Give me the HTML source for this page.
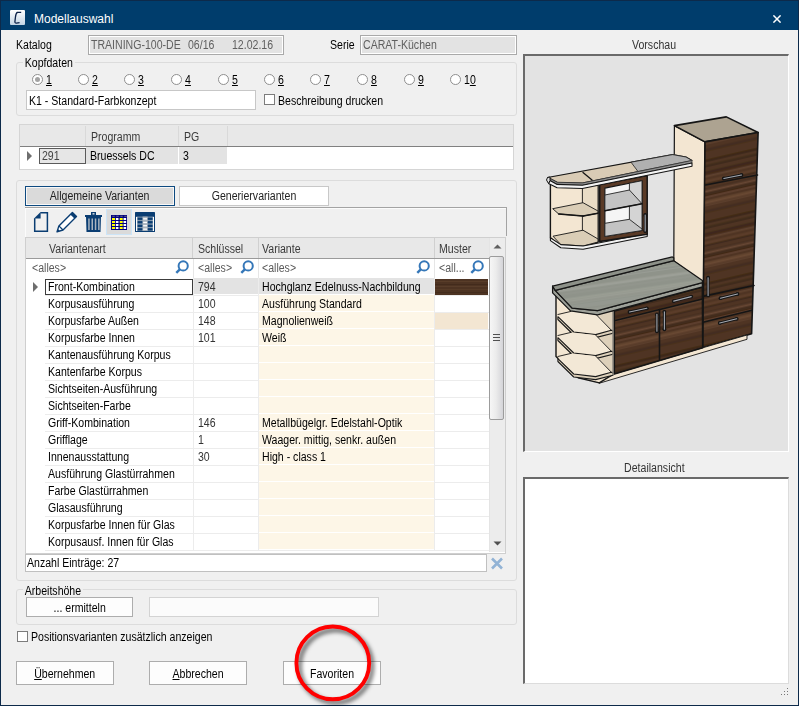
<!DOCTYPE html><html><head><meta charset="utf-8"><style>
*{margin:0;padding:0;box-sizing:border-box}
html,body{width:799px;height:706px;overflow:hidden;background:#f0f0f0}
body{position:relative;font-family:"Liberation Sans",sans-serif;font-size:12px;color:#000}
.a{position:absolute;white-space:nowrap}
.t{position:absolute;white-space:nowrap;line-height:14px;transform-origin:0 0;transform:scaleX(.88)}
.c{position:absolute;white-space:nowrap;line-height:14px;text-align:center}
.c span{display:inline-block;transform:scaleX(.88)}
.grp{position:absolute;border:1px solid #dcdcdc;border-radius:3px}
.lbl{position:absolute;background:#f0f0f0;padding:0 2px;line-height:14px;transform-origin:0 0;transform:scaleX(.88)}
.radio{position:absolute;width:12px;height:12px;border:1px solid #333;border-radius:50%;background:#fff}
.chk{position:absolute;width:11px;height:11px;border:1px solid #333;background:#fff}
.btn{position:absolute;border:1px solid #adadad;background:#fdfdfd;text-align:center;line-height:21px}
</style></head><body>
<div class="a" style="left:0px;top:0px;width:799px;height:30px;background:#003d6c"></div>
<div class="a" style="left:0px;top:0px;width:799px;height:1px;background:#0d2a4a"></div>
<div class="a" style="left:0px;top:0px;width:1px;height:706px;background:#0d2a4a"></div>
<div class="a" style="left:798px;top:0px;width:1px;height:706px;background:#0d2a4a"></div>
<div class="a" style="left:0px;top:705px;width:799px;height:1px;background:#0d2a4a"></div>
<div class="a" style="left:10px;top:10px;width:15px;height:15px;background:linear-gradient(#ffffff,#c2d4e4);border-radius:1px"></div>
<svg class="a" style="left:10px;top:10px" width="15" height="15" viewBox="0 0 15 15"><path d="M11.2 2.4 L7.3 2.4 Q5.8 3.4 5.4 7.5 L4.9 11.8 Q5 13.3 6.4 13.1 L9.6 12.7" fill="none" stroke="#0b2148" stroke-width="1.3"/></svg>
<div class="t" style="left:34px;top:12px;color:#fff;transform:none">Modellauswahl</div>
<svg class="a" style="left:773px;top:15px" width="8" height="8" viewBox="0 0 8 8"><path d="M0.4 0.4 L7.6 7.6 M7.6 0.4 L0.4 7.6" stroke="#fff" stroke-width="1.5"/></svg>
<div class="t" style="left:16px;top:38px;">Katalog</div>
<div class="a" style="left:88px;top:35px;width:196px;height:20px;border:1px solid #a9a9a9;background:#e3e3e3;box-shadow:inset 1px 1px 0 #fff,inset -1px -1px 0 #fff"></div>
<div class="t" style="left:91px;top:38px;color:#5f5f5f">TRAINING-100-DE</div>
<div class="t" style="left:188px;top:38px;color:#5f5f5f">06/16</div>
<div class="t" style="left:232px;top:38px;color:#5f5f5f">12.02.16</div>
<div class="t" style="left:330px;top:38px;">Serie</div>
<div class="a" style="left:360px;top:35px;width:157px;height:20px;border:1px solid #a9a9a9;background:#e3e3e3;box-shadow:inset 1px 1px 0 #fff,inset -1px -1px 0 #fff"></div>
<div class="t" style="left:363px;top:38px;color:#5f5f5f">CARAT-Küchen</div>
<div class="grp" style="left:16px;top:62px;width:501px;height:54px"></div>
<div class="lbl" style="left:23px;top:56px">Kopfdaten</div>
<div class="a" style="left:32px;top:74px;width:11px;height:11px;border:1px solid #8f8f8f;border-radius:50%;background:#fff"></div>
<div class="a" style="left:35px;top:77px;width:5px;height:5px;border-radius:50%;background:#a3a3a3"></div>
<div class="t" style="left:46px;top:73px;"><u>1</u></div>
<div class="a" style="left:78px;top:74px;width:11px;height:11px;border:1px solid #8f8f8f;border-radius:50%;background:#fff"></div>
<div class="t" style="left:92px;top:73px;"><u>2</u></div>
<div class="a" style="left:124px;top:74px;width:11px;height:11px;border:1px solid #8f8f8f;border-radius:50%;background:#fff"></div>
<div class="t" style="left:138px;top:73px;"><u>3</u></div>
<div class="a" style="left:171px;top:74px;width:11px;height:11px;border:1px solid #8f8f8f;border-radius:50%;background:#fff"></div>
<div class="t" style="left:185px;top:73px;"><u>4</u></div>
<div class="a" style="left:218px;top:74px;width:11px;height:11px;border:1px solid #8f8f8f;border-radius:50%;background:#fff"></div>
<div class="t" style="left:232px;top:73px;"><u>5</u></div>
<div class="a" style="left:264px;top:74px;width:11px;height:11px;border:1px solid #8f8f8f;border-radius:50%;background:#fff"></div>
<div class="t" style="left:278px;top:73px;"><u>6</u></div>
<div class="a" style="left:310px;top:74px;width:11px;height:11px;border:1px solid #8f8f8f;border-radius:50%;background:#fff"></div>
<div class="t" style="left:324px;top:73px;"><u>7</u></div>
<div class="a" style="left:357px;top:74px;width:11px;height:11px;border:1px solid #8f8f8f;border-radius:50%;background:#fff"></div>
<div class="t" style="left:371px;top:73px;"><u>8</u></div>
<div class="a" style="left:404px;top:74px;width:11px;height:11px;border:1px solid #8f8f8f;border-radius:50%;background:#fff"></div>
<div class="t" style="left:418px;top:73px;"><u>9</u></div>
<div class="a" style="left:450px;top:74px;width:11px;height:11px;border:1px solid #8f8f8f;border-radius:50%;background:#fff"></div>
<div class="t" style="left:464px;top:73px;">1<u>0</u></div>
<div class="a" style="left:26px;top:90px;width:230px;height:20px;border:1px solid #c7c7c7;background:#fff"></div>
<div class="t" style="left:29px;top:94px;">K1 - Standard-Farbkonzept</div>
<div class="a" style="left:264px;top:94px;width:11px;height:11px;border:1px solid #7c7c7c;background:#fff"></div>
<div class="t" style="left:278px;top:94px;">Beschreibung drucken</div>
<div class="a" style="left:19px;top:124px;width:495px;height:46px;border:1px solid #d5d5d5;background:#fff"></div>
<div class="a" style="left:20px;top:125px;width:493px;height:22px;background:#e8e8e8;border-bottom:1px solid #808080"></div>
<div class="a" style="left:85px;top:126px;width:1px;height:20px;background:#d9d9d9"></div>
<div class="a" style="left:178px;top:126px;width:1px;height:20px;background:#d9d9d9"></div>
<div class="a" style="left:227px;top:126px;width:1px;height:20px;background:#d9d9d9"></div>
<div class="t" style="left:91px;top:130px;color:#3a3a3a">Programm</div>
<div class="t" style="left:184px;top:130px;color:#3a3a3a">PG</div>
<svg class="a" style="left:27px;top:151px" width="6" height="10"><path d="M0 0 L5 5 L0 10Z" fill="#6e6e6e"/></svg>
<div class="a" style="left:39px;top:148px;width:47px;height:16px;border:1px solid #5a5a5a;background:#e6e6e6"></div>
<div class="t" style="left:42px;top:149px;color:#444">291</div>
<div class="a" style="left:86px;top:147px;width:92px;height:17px;background:#e3e3e3"></div>
<div class="a" style="left:179px;top:147px;width:48px;height:17px;background:#e3e3e3"></div>
<div class="t" style="left:90px;top:149px;">Bruessels DC</div>
<div class="t" style="left:183px;top:149px;">3</div>
<div class="grp" style="left:16px;top:180px;width:501px;height:401px"></div>
<div class="a" style="left:25px;top:186px;width:150px;height:20px;border:1px solid #0e4a80;background:#dadada;box-shadow:inset 1px 1px 0 #f8f8f8,inset -1px -1px 0 #f8f8f8"></div>
<div class="c" style="left:25px;top:189px;width:150px;color:#222"><span>Allgemeine Varianten</span></div>
<div class="a" style="left:179px;top:186px;width:150px;height:20px;border:1px solid #c8c8c8;background:#fff"></div>
<div class="c" style="left:179px;top:189px;width:150px;color:#222"><span>Generiervarianten</span></div>
<div class="a" style="left:25px;top:207px;width:482px;height:1px;background:#a3a3a3"></div>
<div class="a" style="left:506px;top:208px;width:1px;height:28px;background:#a3a3a3"></div>
<div class="a" style="left:25px;top:208px;width:481px;height:1px;background:#fbfbfb"></div>
<div class="a" style="left:25px;top:208px;width:1px;height:29px;background:#fbfbfb"></div>
<svg class="a" style="left:25px;top:207px" width="140" height="30" viewBox="25 207 140 30"><path d="M40.4 212.7 H47.4 V231.2 H34.7 V218.2" fill="none" stroke="#0a3d72" stroke-width="1.5"/><path d="M34 218.6 L40.6 212 L40.6 218.6 Z" fill="#0a3d72"/><path d="M57 231.9 L58.9 225.9 L72.4 212.4 L76.5 216.5 L63 230 Z" fill="#fff" stroke="#0a3d72" stroke-width="1.4" stroke-linejoin="round"/><path d="M58.9 225.9 L63 230" stroke="#0a3d72" stroke-width="1.3"/><path d="M57 231.9 L57.9 228.9 L60 231 Z" fill="#0a3d72"/><path d="M70.3 214.5 L72.4 212.4 L76.5 216.5 L74.4 218.6 Z" fill="#0a3d72"/><rect x="91" y="212" width="5" height="3.4" fill="#0a3d72"/><rect x="92.5" y="213.2" width="2" height="1.3" fill="#f0f0f0"/><rect x="85" y="215" width="17" height="2" fill="#0a3d72"/><path d="M86 217 H101 L100.5 232 H86.5 Z" fill="#0a3d72"/><rect x="88.2" y="218.5" width="1.5" height="11.5" fill="#a9b4c0"/><rect x="91.5" y="218.5" width="1.5" height="11.5" fill="#a9b4c0"/><rect x="94.8" y="218.5" width="1.5" height="11.5" fill="#a9b4c0"/><rect x="98.1" y="218.5" width="1.5" height="11.5" fill="#a9b4c0"/><rect x="106.5" y="209.5" width="25" height="25" fill="#dadada" stroke="#cce4f7" stroke-width="1"/><rect x="111" y="215" width="16" height="15" fill="#000080"/><rect x="112.3" y="215.8" width="2.4" height="0.8" fill="#888"/><rect x="116.3" y="215.8" width="2.4" height="0.8" fill="#888"/><rect x="120.3" y="215.8" width="2.4" height="0.8" fill="#888"/><rect x="124.3" y="215.8" width="2.4" height="0.8" fill="#888"/><rect x="112.00" y="218" width="3" height="2" fill="#ffff00"/><rect x="115.85" y="218" width="2.6" height="2" fill="#ffffff"/><rect x="119.70" y="218" width="3" height="2" fill="#ffff00"/><rect x="123.55" y="218" width="2.6" height="2" fill="#ffffff"/><rect x="112.00" y="221" width="3" height="2" fill="#ffff00"/><rect x="115.85" y="221" width="2.6" height="2" fill="#ffffff"/><rect x="119.70" y="221" width="3" height="2" fill="#ffff00"/><rect x="123.55" y="221" width="2.6" height="2" fill="#ffffff"/><rect x="112.00" y="224" width="3" height="2" fill="#ffff00"/><rect x="115.85" y="224" width="2.6" height="2" fill="#ffffff"/><rect x="119.70" y="224" width="3" height="2" fill="#ffff00"/><rect x="123.55" y="224" width="2.6" height="2" fill="#ffffff"/><rect x="112.00" y="227" width="3" height="2" fill="#ffff00"/><rect x="115.85" y="227" width="2.6" height="2" fill="#ffffff"/><rect x="119.70" y="227" width="3" height="2" fill="#ffff00"/><rect x="123.55" y="227" width="2.6" height="2" fill="#ffffff"/><rect x="135" y="212" width="20" height="20" rx="0.6" fill="#0a3d72"/><rect x="136" y="216.6" width="18" height="14.4" fill="#8196ac"/><rect x="136" y="217" width="1.2" height="14" fill="#ffffff"/><rect x="152.8" y="217" width="1.2" height="14" fill="#ffffff"/><rect x="137.6" y="217.6" width="5" height="2.3" fill="#0a3d72"/><rect x="147.6" y="217.6" width="5" height="2.3" fill="#0a3d72"/><rect x="137.6" y="221.1" width="5" height="2.3" fill="#0a3d72"/><rect x="147.6" y="221.1" width="5" height="2.3" fill="#0a3d72"/><rect x="137.6" y="224.7" width="5" height="2.3" fill="#0a3d72"/><rect x="147.6" y="224.7" width="5" height="2.3" fill="#0a3d72"/><rect x="137.6" y="228.2" width="5" height="2.3" fill="#0a3d72"/><rect x="147.6" y="228.2" width="5" height="2.3" fill="#0a3d72"/><rect x="142.6" y="216.6" width="5" height="14.4" fill="#aab4be"/><rect x="143.2" y="218.2" width="3.8" height="1.3" fill="#ffffff"/><rect x="143.2" y="221.8" width="3.8" height="1.3" fill="#ffffff"/><rect x="143.2" y="225.1" width="3.8" height="1.3" fill="#ffffff"/><rect x="143.2" y="228.5" width="3.8" height="1.3" fill="#ffffff"/></svg>
<div class="a" style="left:25px;top:237px;width:481px;height:317px;border:1px solid #cfcfcf;background:#fff"></div>
<div class="a" style="left:26px;top:238px;width:463px;height:21px;background:#e8e8e8;border-bottom:1px solid #9a9a9a"></div>
<div class="a" style="left:192px;top:238px;width:1px;height:20px;background:#d0d0d0"></div>
<div class="a" style="left:258px;top:238px;width:1px;height:20px;background:#d0d0d0"></div>
<div class="a" style="left:434px;top:238px;width:1px;height:20px;background:#d0d0d0"></div>
<div class="t" style="left:49px;top:242px;color:#3a3a3a">Variantenart</div>
<div class="t" style="left:198px;top:242px;color:#3a3a3a">Schlüssel</div>
<div class="t" style="left:262px;top:242px;color:#3a3a3a">Variante</div>
<div class="t" style="left:439px;top:242px;color:#3a3a3a">Muster</div>
<div class="a" style="left:193px;top:259px;width:1px;height:19px;background:#e6e6e6"></div>
<div class="a" style="left:258px;top:259px;width:1px;height:19px;background:#e6e6e6"></div>
<div class="a" style="left:434px;top:259px;width:1px;height:19px;background:#e6e6e6"></div>
<div class="t" style="left:32px;top:261px;color:#5a5a5a">&lt;alles&gt;</div>
<div class="t" style="left:198px;top:261px;color:#5a5a5a">&lt;alles&gt;</div>
<div class="t" style="left:262px;top:261px;color:#5a5a5a">&lt;alles&gt;</div>
<div class="t" style="left:439px;top:261px;color:#5a5a5a">&lt;all...</div>
<svg class="a" style="left:175px;top:260px" width="14" height="14" viewBox="0 0 14 14"><circle cx="8.2" cy="5.9" r="4.6" fill="none" stroke="#3577b8" stroke-width="2"/><path d="M5 9.1 L1.3 12.8" stroke="#3577b8" stroke-width="2.4" stroke-linecap="butt"/></svg>
<svg class="a" style="left:240px;top:260px" width="14" height="14" viewBox="0 0 14 14"><circle cx="8.2" cy="5.9" r="4.6" fill="none" stroke="#3577b8" stroke-width="2"/><path d="M5 9.1 L1.3 12.8" stroke="#3577b8" stroke-width="2.4" stroke-linecap="butt"/></svg>
<svg class="a" style="left:416px;top:260px" width="14" height="14" viewBox="0 0 14 14"><circle cx="8.2" cy="5.9" r="4.6" fill="none" stroke="#3577b8" stroke-width="2"/><path d="M5 9.1 L1.3 12.8" stroke="#3577b8" stroke-width="2.4" stroke-linecap="butt"/></svg>
<svg class="a" style="left:470px;top:260px" width="14" height="14" viewBox="0 0 14 14"><circle cx="8.2" cy="5.9" r="4.6" fill="none" stroke="#3577b8" stroke-width="2"/><path d="M5 9.1 L1.3 12.8" stroke="#3577b8" stroke-width="2.4" stroke-linecap="butt"/></svg>
<div class="a" style="left:194px;top:278px;width:240px;height:16px;background:#e3e3e3"></div>
<div class="a" style="left:45px;top:295px;width:444px;height:1px;background:#ececec"></div>
<div class="a" style="left:193px;top:278px;width:1px;height:17px;background:#ececec"></div>
<div class="a" style="left:258px;top:278px;width:1px;height:17px;background:#ececec"></div>
<div class="a" style="left:434px;top:278px;width:1px;height:17px;background:#ececec"></div>
<div class="t" style="left:48px;top:280px;">Front-Kombination</div>
<div class="t" style="left:198px;top:280px;color:#333">794</div>
<div class="t" style="left:262px;top:280px;">Hochglanz Edelnuss-Nachbildung</div>
<div class="a" style="left:259px;top:295px;width:175px;height:16px;background:#fdf6e7"></div>
<div class="a" style="left:45px;top:312px;width:444px;height:1px;background:#ececec"></div>
<div class="a" style="left:193px;top:295px;width:1px;height:17px;background:#ececec"></div>
<div class="a" style="left:258px;top:295px;width:1px;height:17px;background:#ececec"></div>
<div class="a" style="left:434px;top:295px;width:1px;height:17px;background:#ececec"></div>
<div class="t" style="left:48px;top:297px;">Korpusausführung</div>
<div class="t" style="left:198px;top:297px;color:#333">100</div>
<div class="t" style="left:262px;top:297px;">Ausführung Standard</div>
<div class="a" style="left:259px;top:312px;width:175px;height:16px;background:#fdf6e7"></div>
<div class="a" style="left:45px;top:329px;width:444px;height:1px;background:#ececec"></div>
<div class="a" style="left:193px;top:312px;width:1px;height:17px;background:#ececec"></div>
<div class="a" style="left:258px;top:312px;width:1px;height:17px;background:#ececec"></div>
<div class="a" style="left:434px;top:312px;width:1px;height:17px;background:#ececec"></div>
<div class="t" style="left:48px;top:314px;">Korpusfarbe Außen</div>
<div class="t" style="left:198px;top:314px;color:#333">148</div>
<div class="t" style="left:262px;top:314px;">Magnolienweiß</div>
<div class="a" style="left:259px;top:329px;width:175px;height:16px;background:#fdf6e7"></div>
<div class="a" style="left:45px;top:346px;width:444px;height:1px;background:#ececec"></div>
<div class="a" style="left:193px;top:329px;width:1px;height:17px;background:#ececec"></div>
<div class="a" style="left:258px;top:329px;width:1px;height:17px;background:#ececec"></div>
<div class="a" style="left:434px;top:329px;width:1px;height:17px;background:#ececec"></div>
<div class="t" style="left:48px;top:331px;">Korpusfarbe Innen</div>
<div class="t" style="left:198px;top:331px;color:#333">101</div>
<div class="t" style="left:262px;top:331px;">Weiß</div>
<div class="a" style="left:259px;top:346px;width:175px;height:16px;background:#fdf6e7"></div>
<div class="a" style="left:45px;top:363px;width:444px;height:1px;background:#ececec"></div>
<div class="a" style="left:193px;top:346px;width:1px;height:17px;background:#ececec"></div>
<div class="a" style="left:258px;top:346px;width:1px;height:17px;background:#ececec"></div>
<div class="a" style="left:434px;top:346px;width:1px;height:17px;background:#ececec"></div>
<div class="t" style="left:48px;top:348px;">Kantenausführung Korpus</div>
<div class="t" style="left:198px;top:348px;color:#333"></div>
<div class="t" style="left:262px;top:348px;"></div>
<div class="a" style="left:259px;top:363px;width:175px;height:16px;background:#fdf6e7"></div>
<div class="a" style="left:45px;top:380px;width:444px;height:1px;background:#ececec"></div>
<div class="a" style="left:193px;top:363px;width:1px;height:17px;background:#ececec"></div>
<div class="a" style="left:258px;top:363px;width:1px;height:17px;background:#ececec"></div>
<div class="a" style="left:434px;top:363px;width:1px;height:17px;background:#ececec"></div>
<div class="t" style="left:48px;top:365px;">Kantenfarbe Korpus</div>
<div class="t" style="left:198px;top:365px;color:#333"></div>
<div class="t" style="left:262px;top:365px;"></div>
<div class="a" style="left:259px;top:380px;width:175px;height:16px;background:#fdf6e7"></div>
<div class="a" style="left:45px;top:397px;width:444px;height:1px;background:#ececec"></div>
<div class="a" style="left:193px;top:380px;width:1px;height:17px;background:#ececec"></div>
<div class="a" style="left:258px;top:380px;width:1px;height:17px;background:#ececec"></div>
<div class="a" style="left:434px;top:380px;width:1px;height:17px;background:#ececec"></div>
<div class="t" style="left:48px;top:382px;">Sichtseiten-Ausführung</div>
<div class="t" style="left:198px;top:382px;color:#333"></div>
<div class="t" style="left:262px;top:382px;"></div>
<div class="a" style="left:259px;top:397px;width:175px;height:16px;background:#fdf6e7"></div>
<div class="a" style="left:45px;top:414px;width:444px;height:1px;background:#ececec"></div>
<div class="a" style="left:193px;top:397px;width:1px;height:17px;background:#ececec"></div>
<div class="a" style="left:258px;top:397px;width:1px;height:17px;background:#ececec"></div>
<div class="a" style="left:434px;top:397px;width:1px;height:17px;background:#ececec"></div>
<div class="t" style="left:48px;top:399px;">Sichtseiten-Farbe</div>
<div class="t" style="left:198px;top:399px;color:#333"></div>
<div class="t" style="left:262px;top:399px;"></div>
<div class="a" style="left:259px;top:414px;width:175px;height:16px;background:#fdf6e7"></div>
<div class="a" style="left:45px;top:431px;width:444px;height:1px;background:#ececec"></div>
<div class="a" style="left:193px;top:414px;width:1px;height:17px;background:#ececec"></div>
<div class="a" style="left:258px;top:414px;width:1px;height:17px;background:#ececec"></div>
<div class="a" style="left:434px;top:414px;width:1px;height:17px;background:#ececec"></div>
<div class="t" style="left:48px;top:416px;">Griff-Kombination</div>
<div class="t" style="left:198px;top:416px;color:#333">146</div>
<div class="t" style="left:262px;top:416px;">Metallbügelgr. Edelstahl-Optik</div>
<div class="a" style="left:259px;top:431px;width:175px;height:16px;background:#fdf6e7"></div>
<div class="a" style="left:45px;top:448px;width:444px;height:1px;background:#ececec"></div>
<div class="a" style="left:193px;top:431px;width:1px;height:17px;background:#ececec"></div>
<div class="a" style="left:258px;top:431px;width:1px;height:17px;background:#ececec"></div>
<div class="a" style="left:434px;top:431px;width:1px;height:17px;background:#ececec"></div>
<div class="t" style="left:48px;top:433px;">Grifflage</div>
<div class="t" style="left:198px;top:433px;color:#333">1</div>
<div class="t" style="left:262px;top:433px;">Waager. mittig, senkr. außen</div>
<div class="a" style="left:259px;top:448px;width:175px;height:16px;background:#fdf6e7"></div>
<div class="a" style="left:45px;top:465px;width:444px;height:1px;background:#ececec"></div>
<div class="a" style="left:193px;top:448px;width:1px;height:17px;background:#ececec"></div>
<div class="a" style="left:258px;top:448px;width:1px;height:17px;background:#ececec"></div>
<div class="a" style="left:434px;top:448px;width:1px;height:17px;background:#ececec"></div>
<div class="t" style="left:48px;top:450px;">Innenausstattung</div>
<div class="t" style="left:198px;top:450px;color:#333">30</div>
<div class="t" style="left:262px;top:450px;">High - class 1</div>
<div class="a" style="left:259px;top:465px;width:175px;height:16px;background:#fdf6e7"></div>
<div class="a" style="left:45px;top:482px;width:444px;height:1px;background:#ececec"></div>
<div class="a" style="left:193px;top:465px;width:1px;height:17px;background:#ececec"></div>
<div class="a" style="left:258px;top:465px;width:1px;height:17px;background:#ececec"></div>
<div class="a" style="left:434px;top:465px;width:1px;height:17px;background:#ececec"></div>
<div class="t" style="left:48px;top:467px;">Ausführung Glastürrahmen</div>
<div class="t" style="left:198px;top:467px;color:#333"></div>
<div class="t" style="left:262px;top:467px;"></div>
<div class="a" style="left:259px;top:482px;width:175px;height:16px;background:#fdf6e7"></div>
<div class="a" style="left:45px;top:499px;width:444px;height:1px;background:#ececec"></div>
<div class="a" style="left:193px;top:482px;width:1px;height:17px;background:#ececec"></div>
<div class="a" style="left:258px;top:482px;width:1px;height:17px;background:#ececec"></div>
<div class="a" style="left:434px;top:482px;width:1px;height:17px;background:#ececec"></div>
<div class="t" style="left:48px;top:484px;">Farbe Glastürrahmen</div>
<div class="t" style="left:198px;top:484px;color:#333"></div>
<div class="t" style="left:262px;top:484px;"></div>
<div class="a" style="left:259px;top:499px;width:175px;height:16px;background:#fdf6e7"></div>
<div class="a" style="left:45px;top:516px;width:444px;height:1px;background:#ececec"></div>
<div class="a" style="left:193px;top:499px;width:1px;height:17px;background:#ececec"></div>
<div class="a" style="left:258px;top:499px;width:1px;height:17px;background:#ececec"></div>
<div class="a" style="left:434px;top:499px;width:1px;height:17px;background:#ececec"></div>
<div class="t" style="left:48px;top:501px;">Glasausführung</div>
<div class="t" style="left:198px;top:501px;color:#333"></div>
<div class="t" style="left:262px;top:501px;"></div>
<div class="a" style="left:259px;top:516px;width:175px;height:16px;background:#fdf6e7"></div>
<div class="a" style="left:45px;top:533px;width:444px;height:1px;background:#ececec"></div>
<div class="a" style="left:193px;top:516px;width:1px;height:17px;background:#ececec"></div>
<div class="a" style="left:258px;top:516px;width:1px;height:17px;background:#ececec"></div>
<div class="a" style="left:434px;top:516px;width:1px;height:17px;background:#ececec"></div>
<div class="t" style="left:48px;top:518px;">Korpusfarbe Innen für Glas</div>
<div class="t" style="left:198px;top:518px;color:#333"></div>
<div class="t" style="left:262px;top:518px;"></div>
<div class="a" style="left:259px;top:533px;width:175px;height:16px;background:#fdf6e7"></div>
<div class="a" style="left:45px;top:550px;width:444px;height:1px;background:#ececec"></div>
<div class="a" style="left:193px;top:533px;width:1px;height:17px;background:#ececec"></div>
<div class="a" style="left:258px;top:533px;width:1px;height:17px;background:#ececec"></div>
<div class="a" style="left:434px;top:533px;width:1px;height:17px;background:#ececec"></div>
<div class="t" style="left:48px;top:535px;">Korpusausf. Innen für Glas</div>
<div class="t" style="left:198px;top:535px;color:#333"></div>
<div class="t" style="left:262px;top:535px;"></div>
<div class="a" style="left:45px;top:279px;width:148px;height:16px;border:1px solid #3c3c3c;background:transparent"></div>
<svg class="a" style="left:33px;top:282px" width="6" height="10"><path d="M0 0 L5 5 L0 10Z" fill="#6e6e6e"/></svg>
<svg class="a" style="left:435px;top:279px" width="53" height="16"><rect width="53" height="16" fill="#4d3322"/><rect y="2" width="53" height="1" fill="#5e412c" opacity=".7"/><rect y="5" width="53" height="1" fill="#3e281a" opacity=".7"/><rect y="7" width="53" height="1" fill="#604430" opacity=".6"/><rect y="10" width="53" height="1" fill="#5a3e2a" opacity=".7"/><rect y="13" width="53" height="1" fill="#3f2a1b" opacity=".7"/></svg>
<div class="a" style="left:435px;top:313px;width:53px;height:16px;background:#f3e6d2"></div>
<div class="a" style="left:489px;top:238px;width:16px;height:314px;background:#ececec;border-left:1px solid #e4e4e4"></div>
<svg class="a" style="left:493px;top:244px" width="9" height="5"><path d="M0.5 4.5 L4.5 0.5 L8.5 4.5Z" fill="#606060"/></svg>
<div class="a" style="left:489px;top:256px;width:15px;height:164px;border:1px solid #9c9c9c;background:linear-gradient(90deg,#f6f6f6,#ececec 45%,#d4d4d8);border-radius:2px"></div>
<div class="a" style="left:493px;top:334px;width:7px;height:1px;background:#505050"></div>
<div class="a" style="left:493px;top:337px;width:7px;height:1px;background:#505050"></div>
<div class="a" style="left:493px;top:340px;width:7px;height:1px;background:#505050"></div>
<svg class="a" style="left:493px;top:541px" width="9" height="5"><path d="M0.5 0.5 L4.5 4.5 L8.5 0.5Z" fill="#505050"/></svg>
<div class="a" style="left:25px;top:554px;width:462px;height:18px;border:1px solid #c0c0c0;background:#fff"></div>
<div class="t" style="left:27px;top:556px;">Anzahl Einträge: 27</div>
<svg class="a" style="left:490px;top:557px" width="14" height="13" viewBox="0 0 14 13"><path d="M2 1.5 L12 11.5 M12 1.5 L2 11.5" stroke="#92b3d5" stroke-width="2.6"/></svg>
<div class="grp" style="left:16px;top:589px;width:501px;height:36px"></div>
<div class="lbl" style="left:23px;top:584px">Arbeitshöhe</div>
<div class="a" style="left:26px;top:597px;width:107px;height:20px;border:1px solid #adadad;background:#fdfdfd"></div>
<div class="c" style="left:26px;top:601px;width:107px;"><span>... ermitteln</span></div>
<div class="a" style="left:149px;top:597px;width:230px;height:20px;border:1px solid #d3d3d3;background:#fbfbfb"></div>
<div class="a" style="left:17px;top:631px;width:11px;height:11px;border:1px solid #7c7c7c;background:#fff"></div>
<div class="t" style="left:31px;top:630px;">Positionsvarianten zusätzlich anzeigen</div>
<div class="a" style="left:16px;top:661px;width:98px;height:24px;border:1px solid #adadad;background:#fdfdfd"></div>
<div class="c" style="left:16px;top:667px;width:98px;"><span><u>Ü</u>bernehmen</span></div>
<div class="a" style="left:149px;top:661px;width:98px;height:24px;border:1px solid #adadad;background:#fdfdfd"></div>
<div class="c" style="left:149px;top:667px;width:98px;"><span><u>A</u>bbrechen</span></div>
<div class="a" style="left:283px;top:661px;width:98px;height:24px;border:1px solid #adadad;background:#fdfdfd"></div>
<div class="c" style="left:283px;top:667px;width:98px;"><span>Favoriten</span></div>
<div class="c" style="left:521px;top:38px;width:266px;color:#333"><span>Vorschau</span></div>
<div class="a" style="left:523px;top:54px;width:266px;height:398px;background:#e3e3e3;border-top:2px solid #6a6a6a;border-left:2px solid #6a6a6a;border-right:1px solid #fff;border-bottom:1px solid #fff"></div>
<div class="c" style="left:521px;top:461px;width:266px;color:#333"><span>Detailansicht</span></div>
<div class="a" style="left:523px;top:477px;width:266px;height:207px;background:#fff;border-top:2px solid #6a6a6a;border-left:2px solid #6a6a6a;border-right:1px solid #dcdcdc;border-bottom:1px solid #dcdcdc"></div>
<div class="a" style="left:787px;top:688px;width:1px;height:1px;background:#777"></div>
<div class="a" style="left:784px;top:691px;width:1px;height:1px;background:#777"></div>
<div class="a" style="left:787px;top:691px;width:1px;height:1px;background:#777"></div>
<div class="a" style="left:781px;top:694px;width:1px;height:1px;background:#777"></div>
<div class="a" style="left:784px;top:694px;width:1px;height:1px;background:#777"></div>
<div class="a" style="left:787px;top:694px;width:1px;height:1px;background:#777"></div>
<svg class="a" style="left:280px;top:612px" width="110" height="100" viewBox="0 0 110 100"><defs><filter id="sh" x="-30%" y="-30%" width="160%" height="160%"><feGaussianBlur stdDeviation="2.1"/></filter></defs><circle cx="55.8" cy="54.2" r="36.3" fill="none" stroke="#000" stroke-opacity="0.6" stroke-width="4" filter="url(#sh)"/><circle cx="52.8" cy="50.9" r="36.4" fill="none" stroke="#ff0000" stroke-width="3.9"/></svg>
<svg class="a" style="left:525px;top:56px" width="263" height="394" viewBox="525 56 263 394"><defs><filter id="wblur" x="-10%" y="-50%" width="120%" height="200%"><feGaussianBlur stdDeviation="0.6"/></filter><pattern id="wood" patternUnits="userSpaceOnUse" width="120" height="60" patternTransform="rotate(-13)"><rect width="120" height="60" fill="#4f3423"/><g filter="url(#wblur)"><rect x="-20" y="14.3" width="160" height="2.5" fill="#33200f" opacity="0.62"/><rect x="-20" y="28.4" width="160" height="2.5" fill="#2f1d12" opacity="0.30"/><rect x="-20" y="50.2" width="160" height="1.8" fill="#765340" opacity="0.37"/><rect x="-20" y="43.0" width="160" height="2.4" fill="#2f1d12" opacity="0.47"/><rect x="-20" y="38.3" width="160" height="1.5" fill="#7d5a43" opacity="0.35"/><rect x="-20" y="55.6" width="160" height="2.1" fill="#6e4c36" opacity="0.53"/><rect x="-20" y="3.8" width="160" height="2.9" fill="#2f1d12" opacity="0.31"/><rect x="-20" y="46.8" width="160" height="3.1" fill="#33200f" opacity="0.47"/><rect x="-20" y="43.1" width="160" height="3.2" fill="#7d5a43" opacity="0.58"/><rect x="-20" y="25.6" width="160" height="2.9" fill="#2f1d12" opacity="0.46"/><rect x="-20" y="56.1" width="160" height="3.2" fill="#6e4c36" opacity="0.31"/><rect x="-20" y="29.7" width="160" height="1.8" fill="#7d5a43" opacity="0.45"/><rect x="-20" y="37.6" width="160" height="1.9" fill="#2f1d12" opacity="0.59"/><rect x="-20" y="34.4" width="160" height="2.4" fill="#6a4733" opacity="0.50"/><rect x="-20" y="54.3" width="160" height="2.8" fill="#6e4c36" opacity="0.60"/><rect x="-20" y="59.5" width="160" height="2.7" fill="#765340" opacity="0.54"/><rect x="-20" y="19.6" width="160" height="2.4" fill="#2f1d12" opacity="0.50"/><rect x="-20" y="42.8" width="160" height="1.7" fill="#2f1d12" opacity="0.39"/></g></pattern><pattern id="ctop" patternUnits="userSpaceOnUse" width="160" height="40" patternTransform="rotate(-8)"><rect width="160" height="40" fill="#8f938a"/><rect x="0" y="5.0" width="160" height="2.4" fill="#a3a79e" opacity="0.36"/><rect x="0" y="19.3" width="160" height="2.0" fill="#a3a79e" opacity="0.22"/><rect x="0" y="35.9" width="160" height="1.1" fill="#a3a79e" opacity="0.31"/><rect x="0" y="16.6" width="160" height="1.4" fill="#a3a79e" opacity="0.35"/><rect x="0" y="30.5" width="160" height="2.1" fill="#a3a79e" opacity="0.35"/><rect x="0" y="22.0" width="160" height="3.8" fill="#a3a79e" opacity="0.27"/><rect x="0" y="9.4" width="160" height="1.1" fill="#a3a79e" opacity="0.20"/><rect x="0" y="4.3" width="160" height="2.6" fill="#a3a79e" opacity="0.44"/><rect x="0" y="38.9" width="160" height="1.9" fill="#a3a79e" opacity="0.27"/><rect x="0" y="27.6" width="160" height="3.9" fill="#a3a79e" opacity="0.28"/><rect x="0" y="14.4" width="160" height="1.4" fill="#a3a79e" opacity="0.42"/><rect x="0" y="15.1" width="160" height="3.6" fill="#a3a79e" opacity="0.30"/><rect x="0" y="34.7" width="160" height="3.0" fill="#a3a79e" opacity="0.23"/><rect x="0" y="38.9" width="160" height="3.4" fill="#a3a79e" opacity="0.27"/></pattern></defs><polygon points="674.4,125.6 705.0,141.9 704.0,283.0 673.8,261.0" fill="#f3e6d2" stroke="#151515" stroke-width="1.2" stroke-linejoin="round" /><polygon points="674.4,125.6 726.3,116.9 758.1,132.5 705.0,141.9" fill="#ada391" stroke="#151515" stroke-width="1.6" stroke-linejoin="round" /><polygon points="705.0,141.9 758.1,132.5 751.6,333.7 702.7,347.8" fill="url(#wood)" stroke="#151515" stroke-width="1.6" stroke-linejoin="round" /><line x1="705.6" y1="185" x2="757.5" y2="175" stroke="#151515" stroke-width="1.6" stroke-linecap="round"/><line x1="704" y1="296.1" x2="754" y2="285.5" stroke="#151515" stroke-width="1.6" stroke-linecap="round"/><line x1="703" y1="322.3" x2="752" y2="310.3" stroke="#151515" stroke-width="1.6" stroke-linecap="round"/><line x1="723.8" y1="178.5" x2="741.5" y2="175" stroke="#161616" stroke-width="3" stroke-linecap="round"/><circle cx="723.8" cy="178.5" r="1.9" fill="#161616"/><circle cx="741.5" cy="175" r="1.9" fill="#161616"/><line x1="723.8" y1="178.5" x2="741.5" y2="175" stroke="#a4a8b0" stroke-width="1.1" stroke-linecap="round"/><line x1="708.1" y1="277.7" x2="708.1" y2="295.4" stroke="#161616" stroke-width="3" stroke-linecap="round"/><circle cx="708.1" cy="277.7" r="1.9" fill="#161616"/><circle cx="708.1" cy="295.4" r="1.9" fill="#161616"/><line x1="708.1" y1="277.7" x2="708.1" y2="295.4" stroke="#a4a8b0" stroke-width="1.1" stroke-linecap="round"/><line x1="720.5" y1="298.2" x2="737.5" y2="294" stroke="#161616" stroke-width="3" stroke-linecap="round"/><circle cx="720.5" cy="298.2" r="1.9" fill="#161616"/><circle cx="737.5" cy="294" r="1.9" fill="#161616"/><line x1="720.5" y1="298.2" x2="737.5" y2="294" stroke="#a4a8b0" stroke-width="1.1" stroke-linecap="round"/><line x1="719.7" y1="323" x2="736.7" y2="318.8" stroke="#161616" stroke-width="3" stroke-linecap="round"/><circle cx="719.7" cy="323" r="1.9" fill="#161616"/><circle cx="736.7" cy="318.8" r="1.9" fill="#161616"/><line x1="719.7" y1="323" x2="736.7" y2="318.8" stroke="#a4a8b0" stroke-width="1.1" stroke-linecap="round"/><polygon points="599.0,377.5 614.3,373.9 702.7,347.8 747.0,335.0 747.0,339.3 599.0,383.3" fill="#f3e6d2" stroke="#151515" stroke-width="0.9" stroke-linejoin="round" /><polygon points="614.3,311.0 702.4,287.0 702.7,347.8 614.3,373.9" fill="url(#wood)" stroke="#151515" stroke-width="1.6" stroke-linejoin="round" /><line x1="614.3" y1="320.8" x2="702.4" y2="299" stroke="#151515" stroke-width="1.6" stroke-linecap="round"/><line x1="659.5" y1="309.5" x2="659.5" y2="360" stroke="#151515" stroke-width="1.6" stroke-linecap="round"/><line x1="629.5" y1="312" x2="646.8" y2="308.3" stroke="#161616" stroke-width="3" stroke-linecap="round"/><circle cx="629.5" cy="312" r="1.9" fill="#161616"/><circle cx="646.8" cy="308.3" r="1.9" fill="#161616"/><line x1="629.5" y1="312" x2="646.8" y2="308.3" stroke="#a4a8b0" stroke-width="1.1" stroke-linecap="round"/><line x1="673.7" y1="301.1" x2="691.2" y2="296.6" stroke="#161616" stroke-width="3" stroke-linecap="round"/><circle cx="673.7" cy="301.1" r="1.9" fill="#161616"/><circle cx="691.2" cy="296.6" r="1.9" fill="#161616"/><line x1="673.7" y1="301.1" x2="691.2" y2="296.6" stroke="#a4a8b0" stroke-width="1.1" stroke-linecap="round"/><line x1="656.9" y1="314.4" x2="656.9" y2="331.3" stroke="#161616" stroke-width="3" stroke-linecap="round"/><circle cx="656.9" cy="314.4" r="1.9" fill="#161616"/><circle cx="656.9" cy="331.3" r="1.9" fill="#161616"/><line x1="656.9" y1="314.4" x2="656.9" y2="331.3" stroke="#a4a8b0" stroke-width="1.1" stroke-linecap="round"/><line x1="664.4" y1="311.8" x2="664.4" y2="329.3" stroke="#161616" stroke-width="3" stroke-linecap="round"/><circle cx="664.4" cy="311.8" r="1.9" fill="#161616"/><circle cx="664.4" cy="329.3" r="1.9" fill="#161616"/><line x1="664.4" y1="311.8" x2="664.4" y2="329.3" stroke="#a4a8b0" stroke-width="1.1" stroke-linecap="round"/><polygon points="556.0,294.0 613.0,311.0 613.0,374.4 599.3,382.9 578.1,377.8 556.0,356.6" fill="#f3e6d2" stroke="#151515" stroke-width="1.4" stroke-linejoin="round" /><polygon points="595.6,312.0 613.0,312.0 613.0,331.0 611.3,330.2" fill="#ddd0ba" stroke="none" /><polygon points="595.6,333.0 613.0,333.0 613.0,352.0 611.3,351.2" fill="#ddd0ba" stroke="none" /><polygon points="595.6,354.0 613.0,354.0 613.0,373.0 611.3,372.2" fill="#ddd0ba" stroke="none" /><polygon points="557.9,316.7 571.0,311.4 595.6,314.0 611.3,330.2 595.6,334.6 573.7,332.0" fill="#f3e8d6" stroke="none" /><polygon points="557.9,316.7 573.7,332.0 595.6,334.6 611.3,330.2 613.0,330.5 613.0,333.3 595.6,337.6 573.7,335.0 557.9,319.5" fill="#ddd0ba" stroke="#1a1a1a" stroke-width="1.1" stroke-linejoin="round" /><line x1="571" y1="311.4" x2="557.9" y2="314.5" stroke="#151515" stroke-width="0.9" stroke-linecap="round"/><line x1="595.6" y1="314" x2="611.3" y2="330.2" stroke="#151515" stroke-width="0.9" stroke-linecap="round"/><polygon points="557.9,337.7 571.0,332.4 595.6,335.0 611.3,351.2 595.6,355.6 573.7,353.0" fill="#f3e8d6" stroke="none" /><polygon points="557.9,337.7 573.7,353.0 595.6,355.6 611.3,351.2 613.0,351.5 613.0,354.3 595.6,358.6 573.7,356.0 557.9,340.5" fill="#ddd0ba" stroke="#1a1a1a" stroke-width="1.1" stroke-linejoin="round" /><line x1="571" y1="332.4" x2="557.9" y2="335.5" stroke="#151515" stroke-width="0.9" stroke-linecap="round"/><line x1="595.6" y1="335" x2="611.3" y2="351.2" stroke="#151515" stroke-width="0.9" stroke-linecap="round"/><polygon points="557.9,358.7 571.0,353.4 595.6,356.0 611.3,372.2 595.6,376.6 573.7,374.0" fill="#f3e8d6" stroke="none" /><polygon points="557.9,358.7 573.7,374.0 595.6,376.6 611.3,372.2 613.0,372.5 613.0,375.3 595.6,379.6 573.7,377.0 557.9,361.5" fill="#ddd0ba" stroke="#1a1a1a" stroke-width="1.1" stroke-linejoin="round" /><line x1="571" y1="353.4" x2="557.9" y2="356.5" stroke="#151515" stroke-width="0.9" stroke-linecap="round"/><line x1="595.6" y1="356" x2="611.3" y2="372.2" stroke="#151515" stroke-width="0.9" stroke-linecap="round"/><line x1="613" y1="311" x2="613" y2="374.4" stroke="#8f8a80" stroke-width="1.5" stroke-linecap="round"/><polygon points="552.6,286.1 552.6,292.9 570.5,310.9 597.6,314.9 702.4,287.0 702.4,282.7 597.6,310.7 572.2,308.2 555.2,290.4" fill="#9ea199" stroke="#151515" stroke-width="1.3" stroke-linejoin="round" /><polygon points="555.2,290.4 673.8,260.7 702.4,280.4 702.4,282.7 597.6,310.7 572.2,308.2" fill="url(#ctop)" stroke="#151515" stroke-width="1.2" stroke-linejoin="round" /><polygon points="552.6,286.1 672.3,256.9 673.8,257.8 673.8,260.7 555.2,290.4" fill="#8d9189" stroke="#151515" stroke-width="1.2" stroke-linejoin="round" /><polygon points="550.4,182.0 598.0,185.0 598.0,242.0 583.1,248.0 560.8,246.6 550.4,237.7" fill="#f3e6d2" stroke="#151515" stroke-width="1.4" stroke-linejoin="round" /><polygon points="582.4,186.0 598.0,185.0 598.0,242.0 582.4,236.0" fill="#e9dcc6" stroke="#151515" stroke-width="0.9" stroke-linejoin="round" /><polygon points="552.7,208.7 583.0,202.7 598.0,211.0 598.0,213.2 583.1,216.1 558.6,213.9" fill="#dacdb6" stroke="#151515" stroke-width="0.9" stroke-linejoin="round" /><line x1="558.6" y1="213.9" x2="583.1" y2="216.1" stroke="#151515" stroke-width="1.5" stroke-linecap="round"/><line x1="583.1" y1="216.1" x2="598" y2="213.2" stroke="#151515" stroke-width="1.5" stroke-linecap="round"/><polygon points="553.0,236.2 583.0,230.2 598.0,239.0 598.0,242.0 583.1,246.0 560.8,244.6" fill="#dacdb6" stroke="#151515" stroke-width="0.9" stroke-linejoin="round" /><polygon points="550.4,237.7 560.8,244.6 583.1,246.0 647.2,233.5 647.2,236.5 583.1,249.2 560.8,247.8 550.4,240.6" fill="#f2f2f2" stroke="#151515" stroke-width="1.1" stroke-linejoin="round" /><polygon points="599.7,184.4 647.2,175.5 647.2,234.2 599.7,241.6" fill="#5a3a26" stroke="#151515" stroke-width="1.5" stroke-linejoin="round" /><polygon points="604.9,188.1 642.0,180.7 642.0,230.5 604.9,236.4" fill="#f5f5f5" stroke="#151515" stroke-width="1.1" stroke-linejoin="round" /><polygon points="629.4,183.2 642.0,180.7 642.0,230.5 629.4,226.5" fill="#d4d4d4" stroke="#222" stroke-width="0.9" stroke-linejoin="round" /><polygon points="604.9,195.0 629.4,190.0 642.0,203.7 604.9,210.8" fill="#c3c3c3" stroke="#222" stroke-width="0.9" stroke-linejoin="round" /><line x1="604.9" y1="210.8" x2="642" y2="203.7" stroke="#151515" stroke-width="1.6" stroke-linecap="round"/><polygon points="604.9,223.3 629.4,219.3 642.0,229.0 642.0,230.5 604.9,236.4" fill="#c3c3c3" stroke="#222" stroke-width="0.9" stroke-linejoin="round" /><line x1="645.2" y1="215" x2="645.2" y2="231" stroke="#161616" stroke-width="3" stroke-linecap="round"/><circle cx="645.2" cy="215" r="1.9" fill="#161616"/><circle cx="645.2" cy="231" r="1.9" fill="#161616"/><line x1="645.2" y1="215" x2="645.2" y2="231" stroke="#a4a8b0" stroke-width="1.1" stroke-linecap="round"/><polygon points="547.5,177.5 672.6,154.6 686.0,157.0 692.0,160.5 582.4,183.0 557.1,182.2 550.0,178.5" fill="#d9cbb5" stroke="#151515" stroke-width="1.1" stroke-linejoin="round" /><polygon points="631.0,162.2 672.6,154.6 686.0,157.0 692.0,160.5 638.0,171.5" fill="#b0b0b0" stroke="#222" stroke-width="0.8" stroke-linejoin="round" /><polygon points="550.0,178.5 557.1,182.2 582.4,183.0 692.0,160.5 692.0,163.0 582.4,185.2 557.1,184.4 550.0,180.5" fill="#8f8f8f" stroke="#333" stroke-width="0.7" stroke-linejoin="round" /><polygon points="550.0,180.5 557.1,184.4 582.4,185.2 692.0,163.0 692.0,166.3 582.4,188.5 557.1,187.7 548.5,183.5" fill="#f4f4f4" stroke="#151515" stroke-width="1.1" stroke-linejoin="round" /><polygon points="547.5,177.5 550.0,177.0 550.0,180.5 548.5,183.5 546.5,180.0" fill="#e0e0e0" stroke="#151515" stroke-width="1" stroke-linejoin="round" /><line x1="583" y1="172.5" x2="592" y2="180" stroke="#151515" stroke-width="1.3" stroke-linecap="round"/></svg>
</body></html>
